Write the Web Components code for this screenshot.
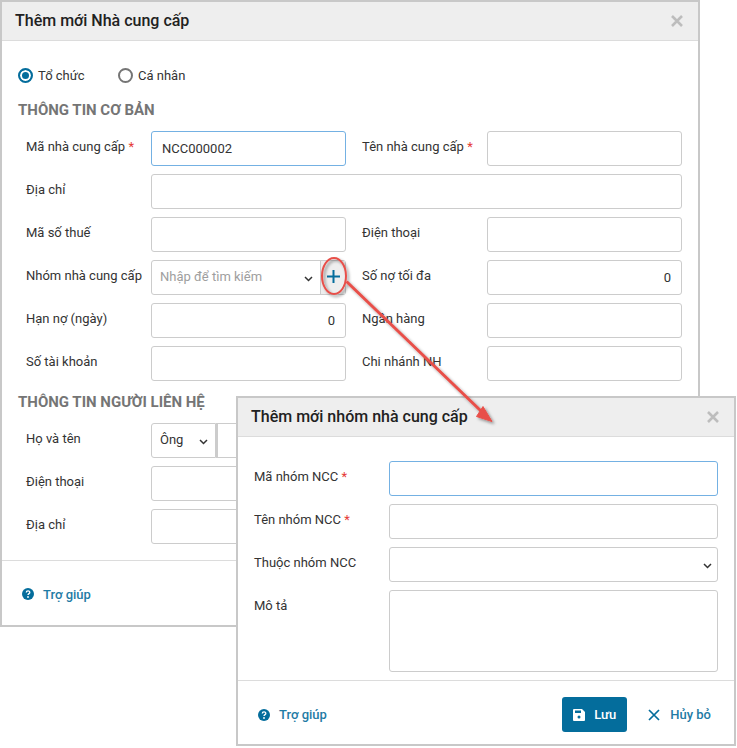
<!DOCTYPE html>
<html lang="vi"><head><meta charset="utf-8"><title>Thêm mới Nhà cung cấp</title>
<style>
html,body{margin:0;padding:0;background:#fff}
body{width:737px;height:748px;position:relative;overflow:hidden;font:13px Roboto,"Liberation Sans",sans-serif;color:#212121}
</style></head><body>

<x-dialog heading="Thêm mới Nhà cung cấp" style="left:0;top:0;width:700px;height:627px">
  <x-form-body>
    <x-radio-group></x-radio-group>
    <x-section style="--sec-top:13px">THÔNG TIN CƠ BẢN</x-section>
    <x-grid>
      <x-label req>Mã nhà cung cấp</x-label><x-field focus value="NCC000002"></x-field>
      <x-label second req>Tên nhà cung cấp</x-label><x-field></x-field>
      <x-label>Địa chỉ</x-label><x-field style="grid-column:2 / 5"></x-field>
      <x-label>Mã số thuế</x-label><x-field></x-field>
      <x-label second>Điện thoại</x-label><x-field></x-field>
      <x-label>Nhóm nhà cung cấp</x-label><x-combo placeholder="Nhập để tìm kiếm" add></x-combo>
      <x-label second>Số nợ tối đa</x-label><x-field right value="0"></x-field>
      <x-label>Hạn nợ (ngày)</x-label><x-field right value="0"></x-field>
      <x-label second>Ngân hàng</x-label><x-field></x-field>
      <x-label>Số tài khoản</x-label><x-field></x-field>
      <x-label second>Chi nhánh NH</x-label><x-field></x-field>
    </x-grid>
    <x-section style="--sec-top:11px">THÔNG TIN NGƯỜI LIÊN HỆ</x-section>
    <x-grid>
      <x-label>Họ và tên</x-label><x-name-field style="grid-column:2 / 5"></x-name-field>
      <x-label>Điện thoại</x-label><x-field></x-field><span></span><span></span>
      <x-label>Địa chỉ</x-label><x-field></x-field><span></span><span></span>
    </x-grid>
  </x-form-body>
  <x-footer slot="footer" style="--foot-h:65px;--foot-pad:2px"><x-help></x-help></x-footer>
</x-dialog>

<x-dialog heading="Thêm mới nhóm nhà cung cấp" style="left:236px;top:396px;width:500px;height:350px">
  <x-group-grid>
    <x-label req>Mã nhóm NCC</x-label><x-field focus></x-field>
    <x-label req>Tên nhóm NCC</x-label><x-field></x-field>
    <x-label>Thuộc nhóm NCC</x-label><x-combo></x-combo>
    <x-label>Mô tả</x-label><x-field area></x-field>
  </x-group-grid>
  <x-footer slot="footer" style="--foot-h:64px;--foot-pad:4px">
    <x-help></x-help>
    <x-actions></x-actions>
  </x-footer>
</x-dialog>

<x-annotation></x-annotation>

<script>
const def=(n,html)=>customElements.define(n,class extends HTMLElement{
  constructor(){super();this.attachShadow({mode:'open'});if(typeof html!=='function')this.shadowRoot.innerHTML=html}
  connectedCallback(){if(typeof html==='function'){this.shadowRoot.innerHTML=html(this)}}
});
const chev=`<svg width="9" height="6" viewBox="0 0 9 6" fill="none" stroke="#333" stroke-width="1.5"><path d="M1 1l3.5 3.5L8 1"/></svg>`;

def('x-dialog',e=>`<style>
:host{display:flex;flex-direction:column;position:absolute;box-sizing:border-box;background:#fff;border:2px solid #c8c8c8}
header{flex:none;height:38px;border-bottom:1px solid #dcdcdc;background:#eee;display:flex;align-items:center;justify-content:space-between;padding:0 15px 0 13px;font-weight:500;font-size:16px;color:#212121}
header span{margin-top:-2px}
svg{display:block}
main{flex:1;min-height:0}
</style><header><span>${e.getAttribute('heading')}</span><svg width="12" height="12" viewBox="0 0 12 12" stroke="#bdbdbd" stroke-width="2.6"><path d="M1 1l10 10M11 1L1 11"/></svg></header><main><slot></slot></main><slot name="footer"></slot>`);

def('x-form-body',`<style>:host{display:block;padding:22px 16px 0 16px}</style><slot></slot>`);

def('x-radio-group',`<style>
:host{display:flex;height:24px;align-items:center;gap:18px;font-size:13px;color:#333}
.r{display:flex;align-items:center;gap:5px}
i{box-sizing:border-box;width:15px;height:15px;border-radius:50%;border:2px solid #757575;display:block;background:#fff}
.on i{border-color:#046d9c;background:#046d9c;box-shadow:inset 0 0 0 2px #fff}
.a{width:82px}
</style><div class="r on a"><i></i><span>Tổ chức</span></div><div class="r"><i></i><span>Cá nhân</span></div>`);

def('x-section',`<style>:host{display:block;margin-top:var(--sec-top,11px);height:20px;line-height:20px;font-weight:700;font-size:15px;color:#757575}</style><slot></slot>`);

def('x-grid',`<style>:host{display:grid;grid-template-columns:125px 195px 141px 195px;row-gap:8px;grid-auto-rows:35px;margin-top:11px;padding-left:8px}</style><slot></slot>`);

def('x-group-grid',`<style>:host{display:grid;grid-template-columns:135px 329px;row-gap:8px;grid-template-rows:35px 35px 35px 82px;padding:24px 16px 0 16px}</style><slot></slot>`);

def('x-label',e=>`<style>:host{display:block;font-size:13px;line-height:15px;padding-top:8px;color:#333;white-space:nowrap;${e.hasAttribute('second')?'padding-left:16px':''}}b{font-weight:400;color:#e53935}</style><slot></slot>${e.hasAttribute('req')?' <b>*</b>':''}`);

def('x-field',e=>{
  const c=e.hasAttribute('focus')?'border-color:#74b1e3':'';
  return `<style>:host{display:block;box-sizing:border-box;height:100%;border:1px solid #ccc;border-radius:3px;background:#fff;padding:0 10px;line-height:33px;font-size:13px;color:#333;${c};${e.hasAttribute('right')?'text-align:right':''}}
  </style>${e.getAttribute('value')||''}`});

def('x-combo',e=>{
 const add=e.hasAttribute('add');
 return `<style>:host{display:flex;box-sizing:border-box;height:35px;border:1px solid #ccc;border-radius:3px;background:#fff;font-size:13px}
 .t{flex:1;display:flex;align-items:center;padding:0 8px 2px;color:#9e9e9e;min-width:0;white-space:nowrap}
 .c{flex:none;width:20px;display:flex;align-items:center;justify-content:center;padding-top:2px}
 .p{flex:none;width:24px;margin-left:2px;background:#eee;border-left:1px solid #ccc;display:flex;align-items:center;justify-content:center;padding-bottom:3px}
 </style><div class="t">${e.getAttribute('placeholder')||''}</div><div class="c">${chev}</div>${add?`<div class="p"><svg width="13" height="13" viewBox="0 0 13 13" stroke="#046d9c" stroke-width="2"><path d="M6.500 0v13M0 6.500h13"/></svg></div>`:''}`});

def('x-name-field',`<style>:host{display:flex;height:35px;font-size:13px;color:#333}
.s{box-sizing:border-box;width:65px;border:1px solid #ccc;border-radius:3px 0 0 3px;display:flex;align-items:center;justify-content:space-between;padding:0 7px 0 8px}
.s span{margin-top:-2px}
.n{box-sizing:border-box;flex:1;border:1px solid #ccc;border-left-width:2px;border-radius:0 3px 3px 0}
.s svg{margin-top:2px}
</style><div class="s"><span>Ông</span>${chev}</div><div class="n"></div>`);

def('x-footer',`<style>:host{display:flex;flex:none;align-items:center;justify-content:space-between;border-top:1px solid #dcdcdc;box-sizing:border-box;height:var(--foot-h);padding-top:var(--foot-pad)}
</style><slot></slot>`);

def('x-help',`<style>:host{display:flex;align-items:center;gap:9px;padding-left:20px;font-weight:500;font-size:13px;color:#1f7ba5}
svg{display:block}</style><svg width="12" height="12" viewBox="0 0 12 12"><circle cx="6" cy="6" r="6" fill="#046d9c"/><path d="M4.300 4.600c0-2.200 3.500-2.200 3.500-.2 0 1.300-1.800 1.200-1.800 2.700" fill="none" stroke="#fff" stroke-width="1.300"/><circle cx="6" cy="9" r=".9" fill="#fff"/></svg><span>Trợ giúp</span>`);

def('x-actions',`<style>:host{display:flex;align-items:center;padding-right:23px;font-weight:500;font-size:13px}
.save{box-sizing:border-box;width:65px;height:35px;border-radius:3px;background:#046d9c;color:#fff;display:flex;align-items:center;padding-left:11px;gap:9px}
.cancel{display:flex;align-items:center;gap:10px;margin-left:21px;color:#1f7ba5}
svg{display:block}</style>
<div class="save"><svg width="12" height="12" viewBox="0 0 12 12"><path d="M1 0h8l3 3v8a1 1 0 0 1-1 1H1a1 1 0 0 1-1-1V1a1 1 0 0 1 1-1z" fill="#fff"/><rect x="2" y="1.500" width="6" height="2.500" fill="#046d9c"/><circle cx="6" cy="8" r="1.500" fill="#046d9c"/></svg><span>Lưu</span></div>
<div class="cancel"><svg width="12" height="12" viewBox="0 0 12 12" stroke="#046d9c" stroke-width="1.700"><path d="M1 1l10 10M11 1L1 11"/></svg><span>Hủy bỏ</span></div>`);

def('x-annotation',`<style>:host{position:absolute;left:0;top:0;width:737px;height:748px;pointer-events:none;display:block}svg{display:block;overflow:visible}</style>
<svg width="737" height="748" viewBox="0 0 737 748"><defs><filter id="s" x="-20%" y="-20%" width="140%" height="140%"><feDropShadow dx="2" dy="2" stdDeviation="1.500" flood-color="#000" flood-opacity=".4"/></filter></defs>
<g filter="url(#s)" fill="none" stroke="#e8504a"><ellipse cx="334" cy="276" rx="12" ry="18" stroke-width="2"/><path d="M346.500 281.500L481 411" stroke-width="3"/><path d="M492 421.500L476.500 416.500L483 406.500Z" fill="#e8504a" stroke-width="1"/></g></svg>`);
</script>
</body></html>
